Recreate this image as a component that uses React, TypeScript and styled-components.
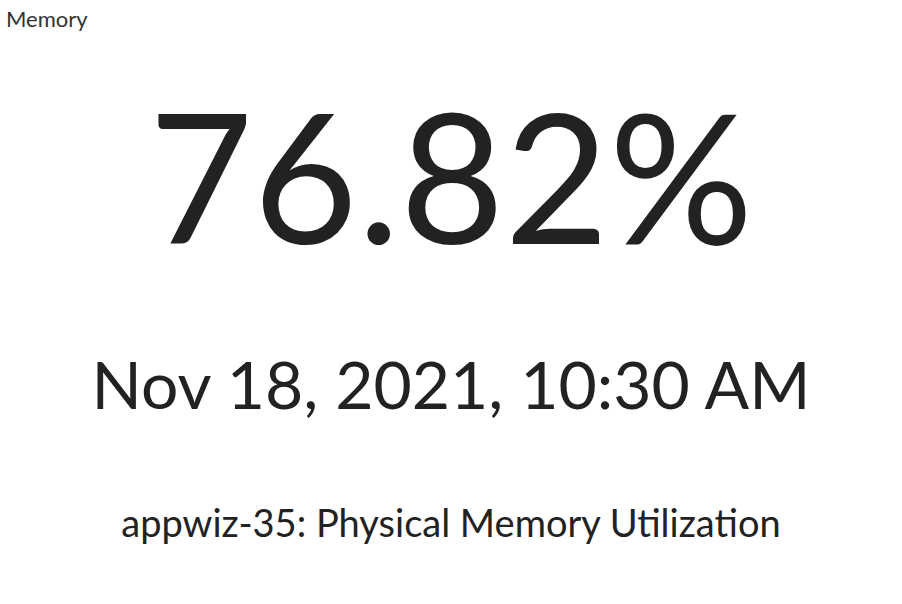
import React from "react";
import styled, { createGlobalStyle } from "styled-components";

const GlobalStyle = createGlobalStyle`
html, body {
    margin: 0;
    padding: 0;
    background: #ffffff;
}
body {
    font-family: Lato, "Open Sans", sans-serif;
    color: #222222;
}
`;

export default function App() {
    return (
        <Panel>
            <GlobalStyle />
            <Title>Memory</Title>
            <Body>
                <Value>76.82%</Value>
                <Timestamp>Nov 18, 2021, 10:30 AM</Timestamp>
                <Caption>appwiz-35: Physical Memory Utilization</Caption>
            </Body>
        </Panel>
    );
}

const Panel = styled.div`
width: 902px;
height: 604px;
display: flex;
flex-direction: column;
overflow: hidden;
`;

const Title = styled.div`
padding: 6px 0 0 6px;
font-size: 22px;
line-height: 26px;
color: #333333;
`;

const Body = styled.div`
flex: 1;
display: flex;
flex-direction: column;
align-items: center;
`;

const Value = styled.div`
margin-top: 42px;
font-size: 180px;
line-height: 200px;
`;

const Timestamp = styled.div`
margin-top: 70px;
font-size: 66px;
line-height: 80px;
`;

const Caption = styled.div`
margin-top: 76px;
font-size: 38px;
line-height: 44px;
`;
